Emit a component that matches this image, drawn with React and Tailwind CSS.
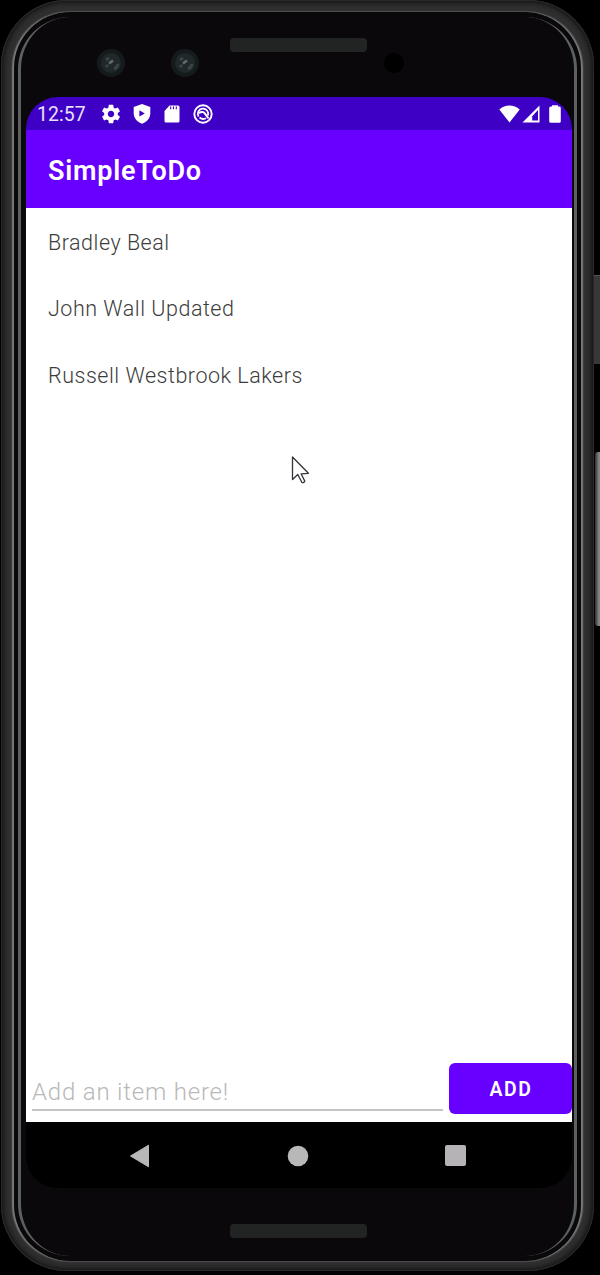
const todos = ['Bradley Beal', 'John Wall Updated', 'Russell Westbrook Lakers'];

function GearIcon() {
  return (
    <svg viewBox="0 0 24 24" className="h-[22px] w-[22px]" fill="currentColor">
      <path d="M19.43 12.98c.04-.32.07-.64.07-.98s-.03-.66-.07-.98l2.11-1.65c.19-.15.24-.42.12-.64l-2-3.46c-.12-.22-.39-.3-.61-.22l-2.49 1c-.52-.4-1.08-.73-1.69-.98l-.38-2.65C14.46 2.18 14.25 2 14 2h-4c-.25 0-.46.18-.49.42l-.38 2.65c-.61.25-1.17.59-1.69.98l-2.49-1c-.23-.09-.49 0-.61.22l-2 3.46c-.13.22-.07.49.12.64l2.11 1.65c-.04.32-.07.65-.07.98s.03.66.07.98l-2.11 1.65c-.19.15-.24.42-.12.64l2 3.46c.12.22.39.3.61.22l2.49-1c.52.4 1.08.73 1.69.98l.38 2.65c.03.24.24.42.49.42h4c.25 0 .46-.18.49-.42l.38-2.65c.61-.25 1.17-.59 1.69-.98l2.49 1c.23.09.49 0 .61-.22l2-3.46c.12-.22.07-.49-.12-.64l-2.11-1.65zM12 15.5c-1.93 0-3.5-1.57-3.5-3.5s1.57-3.5 3.5-3.5 3.5 1.57 3.5 3.5-1.57 3.5-3.5 3.5z" />
    </svg>
  );
}

function ShieldIcon() {
  return (
    <svg viewBox="0 0 18 20" className="h-5 w-[18px]">
      <path d="M9 0 17.3 3v6.3c0 5-3.5 8.8-8.3 10.4C4.200 18.100.7 14.300.7 9.300V3z" fill="currentColor" />
      <path d="M6.400 6.200v6.400L11.800 9.400z" fill="#3e00c4" />
    </svg>
  );
}

function SdCardIcon() {
  return (
    <svg viewBox="0 0 16 18" className="h-[18px] w-4">
      <path d="M5.500.5H14a1.500 1.500 0 0 1 1.500 1.500v14a1.500 1.500 0 0 1-1.500 1.500H2A1.500 1.500 0 0 1 .5 16V6z" fill="currentColor" />
      <path d="M6.700 1.500v2.800M9.500 1.500v2.800M12.300 1.500v2.800" stroke="#3e00c4" strokeWidth="1.100" />
    </svg>
  );
}

function DebugIcon() {
  return (
    <svg viewBox="0 0 20 20" className="h-5 w-5" fill="none" stroke="currentColor">
      <circle cx="10" cy="10" r="8.700" strokeWidth="1.900" />
      <path d="M5.600 12.600A5.200 5.200 0 1 1 14.900 11.500" strokeWidth="1.800" />
      <path d="M6 9.200C8 7.500 10.500 7.800 12 9.600L15.500 14.500" strokeWidth="2" />
      <path d="M6.500 13.500q3 2.500 6.500.8" strokeWidth="1.800" />
    </svg>
  );
}

function StatusBar() {
  return (
    <div className="flex h-[33px] items-center bg-[#3e00c4] pl-[11px] pr-[11px] text-white">
      <span className="w-[63px] whitespace-nowrap pt-[2px] text-[19.400px] leading-none tracking-[0.100px] text-[#e9e0fa]">12:57</span>
      <div className="flex items-center">
        <GearIcon />
        <span className="ml-[11px]"><ShieldIcon /></span>
        <span className="ml-[13px]"><SdCardIcon /></span>
        <span className="ml-[13px]"><DebugIcon /></span>
      </div>
      <div className="ml-auto flex items-center">
        <svg viewBox="0 0 21 18" className="h-[18px] w-[21px]" fill="currentColor">
          <path d="M.3 4.400C6-.7 15-.7 20.700 4.400L10.500 17.400z" />
        </svg>
        <svg viewBox="0 0 18 18" className="ml-[2px] h-[18px] w-[18px]">
          <path d="M17.500.5v17H.5z" fill="currentColor" />
          <path d="M16 5v10.500h-5.800v-4.200z" fill="#3e00c4" />
        </svg>
        <svg viewBox="0 0 12 18" className="ml-[9px] h-[18px] w-3" fill="currentColor">
          <path d="M3 .2h6v1.300h1.300A1.500 1.500 0 0 1 11.800 3v13.300a1.500 1.500 0 0 1-1.500 1.500H1.700a1.500 1.500 0 0 1-1.500-1.500V3A1.500 1.500 0 0 1 1.700 1.500H3z" />
        </svg>
      </div>
    </div>
  );
}

function NavBar() {
  return (
    <div className="flex h-[66px] items-center bg-black pl-[103px] pr-[106px] pt-px">
      <svg viewBox="0 0 20 24" className="h-6 w-5"><path d="M1.500 12 19.500 1.200v21.600z" fill="#b8b8b8" stroke="#b8b8b8" strokeLinejoin="round" /></svg>
      <svg viewBox="0 0 22 22" className="ml-[138px] h-[22px] w-[22px]"><circle cx="11" cy="11" r="10.300" fill="#b8b8b8" /></svg>
      <div className="ml-auto h-[21px] w-[21px] rounded-[2px] bg-[#b5b3b5]" />
    </div>
  );
}

function Screen() {
  return (
    <div className="flex h-[1091px] w-[546px] flex-col overflow-hidden rounded-[32px]">
      <StatusBar />
      <header className="flex h-[78px] items-center bg-[#6800ff] pl-[22px] pt-1">
        <h1 className="whitespace-nowrap text-[27px] font-semibold leading-none tracking-[0.750px] text-white">SimpleToDo</h1>
      </header>
      <main className="flex grow flex-col bg-white">
        <ul className="grow">
          {todos.map((todo) => (
            <li key={todo} className="flex h-[66.500px] items-center whitespace-nowrap pl-[22px] pt-[3px] text-[21.500px] font-[350] tracking-[0.520px] text-[#3c3c3c]">
              {todo}
            </li>
          ))}
        </ul>
        <div className="flex h-[59px] items-start pl-[6px]">
          <div className="flex h-12 w-[411px] items-center border-b-2 border-[#c4c4c4] pt-[11px]">
            <span className="whitespace-nowrap text-[24px] font-light leading-none tracking-[0.800px] text-[#b8b8b8]">Add an item here!</span>
          </div>
          <button className="ml-[6px] h-[51px] w-[123px] rounded-[6px] bg-[#6800ff] pl-px pt-[2px] text-[19.400px] font-semibold tracking-[1.600px] text-white">ADD</button>
        </div>
      </main>
      <NavBar />
    </div>
  );
}

function Lens() {
  return (
    <svg viewBox="0 0 28 28" className="h-7 w-7">
      <circle cx="14" cy="14" r="14" fill="#151a1c" />
      <circle cx="14" cy="14" r="10" fill="#20282a" />
      <path d="M9 11l3-2M9 16l2 2M17 20a7 7 0 0 0 4-5" stroke="#3b4446" strokeWidth="3" fill="none" />
      <path d="M12 14.500l4-3" stroke="#656e70" strokeWidth="2.500" />
    </svg>
  );
}

export default function App() {
  return (
    <div className="relative h-[1275px] w-[600px] overflow-hidden bg-black pl-px font-[Roboto,sans-serif]">
      <div className="absolute left-[594px] top-[275px] h-[89px] w-[8px] border-t border-[#555] bg-[#383838]" />
      <div className="absolute left-[595px] top-[452px] h-[174px] w-[8px] rounded-[3px] bg-linear-to-r from-[#303030] via-[#8a8a8a] to-[#555]" />
      <div className="h-[1271px] w-[593px] rounded-[66px] bg-[#303030] px-[13px] pb-[10px] pt-3 shadow-[inset_0_0_0_1px_#292929,inset_0_0_3px_3px_#191919,inset_0_0_3px_7px_#2c2c2c]">
        <div className="h-[1249px] w-[567px] rounded-[56px] bg-[#0a080b] px-1 pt-[5px] shadow-[-1.5px_0_1.5px_0_#7d7d7d,1.5px_0_1.5px_0_#7d7d7d,0_0_3px_0_#3a3a3a]">
          <div className="h-[1239px] w-[559px] rounded-[52px] border-x-[3px] border-[#5d6061] px-[5px]">
            <div className="flex h-20 items-start pl-[71px]">
              <div className="mt-8 flex">
                <Lens />
                <div className="ml-[46px]"><Lens /></div>
              </div>
              <div className="ml-[31px] mt-[21px] h-[14px] w-[137px] rounded-[4px] bg-[#222323]" />
              <div className="ml-[17px] mt-[36px] h-5 w-5 rounded-full bg-black" />
            </div>
            <Screen />
            <div className="ml-[204px] mt-9 h-[14px] w-[137px] rounded-[4px] bg-[#222323]" />
          </div>
        </div>
      </div>
      <svg viewBox="0 0 20 30" className="absolute left-[290px] top-[455px] h-[30px] w-5">
        <path d="M2.500 2v22.500l5.300-5 4 7.700q1.500 1.300 3-1.100l-3.700-7.300 7.300-.5z" fill="#fff" stroke="#34343a" strokeWidth="1.300" strokeLinejoin="round" />
      </svg>
    </div>
  );
}
